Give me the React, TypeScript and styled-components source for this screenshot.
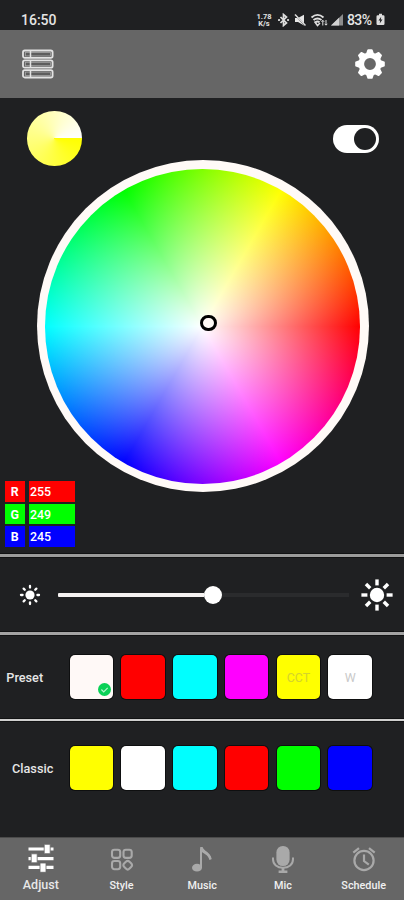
import React from 'react';
import styled, { createGlobalStyle } from 'styled-components';

const GlobalStyle = createGlobalStyle`
  * { box-sizing: border-box; }
  body { margin: 0; background: #1f2022; }
  svg { display: block; flex: none; }
`;

const Screen = styled.main`
  width: 404px;
  height: 900px;
  display: flex;
  flex-direction: column;
  overflow: hidden;
  background: #1f2022;
  color: #fff;
  font-family: Roboto, 'Liberation Sans', sans-serif;
`;

const StatusBar = styled.header`
  height: 30px;
  padding: 9px 19px 0 21px;
  display: flex;
  justify-content: space-between;
  align-items: center;
  color: #e4e4e4;
`;

const Clock = styled.time`
  font-size: 14px;
  line-height: 20px;
  font-weight: 500;
`;

const StatusIcons = styled.div`
  display: flex;
  align-items: center;
  height: 20px;
`;

const NetSpeed = styled.div`
  width: 16px;
  margin-right: 6px;
  font-size: 7.5px;
  line-height: 7px;
  font-weight: 700;
  text-align: center;
`;

const Battery = styled.span`
  width: 27px;
  margin: 0 2px 0 3px;
  font-size: 14px;
  line-height: 20px;
  font-weight: 500;
  letter-spacing: -0.6px;
  white-space: nowrap;
`;

const Toolbar = styled.nav`
  height: 68px;
  padding: 0 19px 0 22px;
  display: flex;
  justify-content: space-between;
  align-items: center;
  background: #666;
`;

const Picker = styled.section`
  height: 456px;
  display: flex;
  flex-direction: column;
`;

const PickerTop = styled.div`
  height: 62.3px;
  padding: 13px 25px 0 27px;
  display: flex;
  justify-content: space-between;
  align-items: flex-start;
`;

const Preview = styled.div`
  width: 54.5px;
  height: 54.5px;
  border-radius: 50%;
  background: conic-gradient(from 90deg, #ff0, #fff);
`;

const Toggle = styled.div`
  width: 46px;
  height: 28px;
  margin-top: 13.5px;
  padding: 3px;
  display: flex;
  justify-content: flex-end;
  border-radius: 14px;
  background: #fff;
`;

const ToggleKnob = styled.span`
  width: 22px;
  height: 22px;
  border-radius: 50%;
  background: #1f2022;
`;

const Wheel = styled.div`
  position: relative;
  flex: none;
  width: 332px;
  height: 332px;
  margin: 0 0 0 36.8px;
  padding: 8.5px;
  border-radius: 50%;
  background: #fffaf7;
`;

const WheelColors = styled.div`
  width: 100%;
  height: 100%;
  border-radius: 50%;
  background:
    radial-gradient(closest-side, #fff, rgba(255, 255, 255, 0)),
    conic-gradient(from 90deg, #f00, #f0f, #00f, #0ff, #0f0, #ff0, #f00);
`;

const WheelCursor = styled.span`
  position: absolute;
  left: 163.2px;
  top: 154.6px;
  width: 16.6px;
  height: 16.6px;
  border: 3.2px solid #000;
  border-radius: 50%;
  background: #fff9f5;
`;

const Channels = styled.div`
  display: flex;
  flex-direction: column;
  gap: 2px;
  margin: -11.3px 0 0 4.6px;
`;

const Channel = styled.div`
  display: flex;
  gap: 4.4px;
  height: 20.6px;
  font-size: 12.4px;
  line-height: 22px;
  font-weight: 500;
`;

const ChannelName = styled.span<{ $color: string }>`
  width: 20.4px;
  text-align: center;
  font-weight: 700;
  background: ${(p) => p.$color};
`;

const ChannelValue = styled.span<{ $color: string }>`
  width: 45.6px;
  padding-left: 0.5px;
  background: ${(p) => p.$color};
`;

const Divider = styled.div<{ $h: number; $color: string }>`
  flex: none;
  height: ${(p) => p.$h}px;
  background: ${(p) => p.$color};
  box-shadow: 0 0 0 1px #111213;
`;

const Brightness = styled.section`
  height: 75px;
  padding: 0 10px 0 19px;
  display: flex;
  align-items: center;
`;

const Track = styled.div`
  display: flex;
  align-items: center;
  width: 291px;
  margin: 0 11px 0 17px;
`;

const TrackFilled = styled.span`
  width: 146px;
  height: 4px;
  border-radius: 1px 0 0 1px;
  background: #f5f2f1;
`;

const Thumb = styled.span`
  width: 18px;
  height: 18px;
  border-radius: 50%;
  background: #fff;
`;

const TrackRest = styled.span`
  flex: 1;
  height: 4px;
  background: #2a2b2d;
`;

const Palette = styled.section<{ $h: number; $pad: number }>`
  height: ${(p) => p.$h}px;
  padding-top: ${(p) => p.$pad}px;
  display: flex;
  align-items: flex-start;
`;

const PaletteLabel = styled.h2<{ $indent: number }>`
  width: 69.5px;
  margin: 0;
  padding-left: ${(p) => p.$indent}px;
  font-size: 12.7px;
  line-height: 46px;
  font-weight: 500;
  color: #e6e6e6;
`;

const Swatches = styled.div`
  display: flex;
  gap: 8.2px;
`;

const Swatch = styled.button<{ $color: string; $text?: string }>`
  position: relative;
  width: 43.6px;
  height: 44px;
  padding: 1px 0 0;
  border: 0;
  border-radius: 5px;
  background: ${(p) => p.$color};
  color: ${(p) => p.$text || '#fff'};
  font: 400 12.4px Roboto, sans-serif;
  box-shadow: 0 0 0 1px #0e0f10;
`;

const Check = styled.svg`
  position: absolute;
  right: 2.6px;
  bottom: 3px;
`;

const TabBar = styled.nav`
  flex: 1;
  display: grid;
  grid-template-columns: repeat(5, 1fr);
  padding-left: 0.5px;
  border-top: 1px solid #4b4b4b;
  background: #666;
`;

const Tab = styled.a<{ $active?: boolean }>`
  display: flex;
  flex-direction: column;
  align-items: center;
  padding-top: 6px;
  color: ${(p) => (p.$active ? '#fff' : '#a9a9a9')};
`;

const TabLabel = styled.span<{ $active?: boolean }>`
  margin-top: ${(p) => (p.$active ? 5 : 6)}px;
  font-size: ${(p) => (p.$active ? 12.5 : 10.8)}px;
  line-height: 14px;
  font-weight: 500;
  color: ${(p) => (p.$active ? '#e8e8e8' : '#f0f0f0')};
`;

function StatusGlyphs() {
  return (
    <svg width="52" height="14" viewBox="0 0 52 14" fill="none" stroke="#dedede">
      <path d="M2.500 4l6 6-3 2.500v-11l3 2.500-6 6" strokeWidth="1.700" />
      <path d="M1 7h.1M10 7h.1" strokeWidth="2.200" strokeLinecap="round" />
      <path d="M17 5h3L26 1.800v10.800l-6-3.600h-3z" fill="#e6e6e6" stroke="none" />
      <path d="M17.500 2l9.500 10.500" stroke="#1f2022" strokeWidth="1.200" />
      <path d="M17 1.500l10.500 11" strokeWidth="1.500" />
      <path d="M33.500 4.400c3.700-3.100 8.300-3.100 12 0M35.500 7c2.500-2 5.500-2 8 0M37.500 9.300c1.200-.9 2.800-.9 4 0" strokeWidth="1.900" />
      <path d="M36.500 8.500l3 4 2.500-2.500" strokeWidth="1.500" />
      <path d="M44.800 7.500v5M43.500 8.800l1.300-1.500 1.300 1.500M48 7v5M46.700 10.800l1.300 1.400 1.300-1.400" strokeWidth="1" />
    </svg>
  );
}

function SignalGlyph() {
  return (
    <svg width="14" height="13" viewBox="0 0 14 13">
      <path d="M1 12.400L13 1v11.400z" fill="#8d8d8d" />
      <path d="M1 12.400L9 4.800v7.600z" fill="#d2d2d2" />
    </svg>
  );
}

function BatteryGlyph() {
  return (
    <svg width="9" height="13" viewBox="0 0 9 13">
      <path d="M3 .8h3v1.400h1.300q1.200 0 1.200 1.200v7.400q0 1.200-1.200 1.200H1.700Q.5 12 .5 10.800V3.400q0-1.200 1.200-1.200H3z" fill="#dedede" />
      <path d="M5.200 3.800L2.500 7.500h1.700l-.5 3 2.800-3.900H4.800z" fill="#1f2022" />
    </svg>
  );
}

function DeviceListIcon() {
  return (
    <svg width="32" height="30" viewBox="0 0 32 30" fill="none" stroke="#e2e2e2" strokeWidth="1.800">
      {[1.500, 11.300, 21.100].map((y) => (
        <g key={y}>
          <rect x="1" y={y} width="29.600" height="7.400" rx="1.800" />
          <rect x="3.500" y={y + 2} width="25" height="3.400" fill="#5d5d5d" stroke="#a5a5a5" strokeWidth=".8" />
          <path d={`M8.500 ${y}v7.400`} strokeWidth="1.500" />
        </g>
      ))}
    </svg>
  );
}

function GearIcon() {
  return (
    <svg width="30" height="30" viewBox="-15 -15 30 30">
      <circle r="8.700" fill="none" stroke="#fff" strokeWidth="5.600" />
      {[0, 45, 90, 135, 180, 225, 270, 315].map((a) => (
        <path key={a} d="M-4-10.200L-2.600-14.200Q-2.400-14.800-1.700-14.800H1.700Q2.400-14.800 2.600-14.200L4-10.200z" fill="#fff" transform={`rotate(${a})`} />
      ))}
    </svg>
  );
}

function SunIcon({ size, core, start, end, stroke, cap }: { size: number; core: number; start: number; end: number; stroke: number; cap: 'butt' | 'round' }) {
  return (
    <svg width={size} height={size} viewBox={`${-size / 2} ${-size / 2} ${size} ${size}`}>
      <circle r={core} fill="#fff" />
      {[0, 45, 90, 135, 180, 225, 270, 315].map((a) => (
        <path key={a} d={`M0-${start}V-${end}`} stroke="#fff" strokeWidth={stroke} strokeLinecap={cap} transform={`rotate(${a})`} />
      ))}
    </svg>
  );
}

function AdjustIcon() {
  return (
    <svg width="26" height="29" viewBox="0 0 26 29" fill="#fff">
      <path d="M.5 3.400h25v3.200H.5zM.5 13h25v3.200H.5zM.5 21.800h25V25H.5z" />
      <path d="M16.200.3h6v9.400h-6zM3.200 9.800h6v9h-6zM12 19h6v9.300h-6z" stroke="#666" strokeWidth=".8" />
    </svg>
  );
}

function StyleIcon() {
  return (
    <svg width="24" height="29" viewBox="0 0 24 29" fill="none" stroke="currentColor" strokeWidth="2.100">
      <rect x="2" y="5.700" width="8.200" height="8.200" rx="2.400" />
      <rect x="13.500" y="5.700" width="8.200" height="8.200" rx="2.400" />
      <rect x="2" y="17" width="8.200" height="8.200" rx="2.400" />
      <rect x="14" y="17.500" width="7.400" height="7.400" rx="2.600" transform="rotate(45 17.700 21.200)" />
    </svg>
  );
}

function MusicIcon() {
  return (
    <svg width="24" height="29" viewBox="0 0 24 29">
      <ellipse cx="7" cy="23.700" rx="5" ry="3.900" fill="currentColor" />
      <path d="M11 24V4.200c1.800 4.300 8.500 4.100 9.600 10.800" fill="none" stroke="currentColor" strokeWidth="2" />
      <path d="M10 3h2.600c1.300 4.500 8 5 8.900 12.300L19.500 16C18 10.500 14 10 12 8z" fill="currentColor" />
    </svg>
  );
}

function MicIcon() {
  return (
    <svg width="24" height="29" viewBox="0 0 24 29">
      <rect x="5.400" y="2" width="13.200" height="20" rx="6.400" fill="currentColor" />
      <path d="M2 13.500v1.800c0 5.200 4.200 8.500 10 8.500s10-3.300 10-8.500v-1.800" fill="none" stroke="currentColor" strokeWidth="2" />
      <path d="M10.600 23h2.800v3.500h3V29H7.600v-2.500h3z" fill="currentColor" />
    </svg>
  );
}

function ScheduleIcon() {
  return (
    <svg width="26" height="29" viewBox="0 0 26 29" fill="none" stroke="currentColor" strokeWidth="2.200">
      <circle cx="13" cy="16.500" r="9.600" />
      <path d="M13 10.500v6.500l4.800 3.700M2.300 8.700l5.700-4.500M23.700 8.700L18 4.200" />
    </svg>
  );
}

const channels = [
  { name: 'R', value: 255, color: '#f00' },
  { name: 'G', value: 249, color: '#0f0' },
  { name: 'B', value: 245, color: '#00f' },
];

const presets = [
  { color: '#fff9f7', selected: true },
  { color: '#f00' },
  { color: '#0ff' },
  { color: '#f0f' },
  { color: '#ff0', label: 'CCT', text: '#d4d42c' },
  { color: '#fff', label: 'W', text: '#c9c9c9' },
];

const classics = ['#ff0', '#fff', '#0ff', '#f00', '#0f0', '#00f'];

const tabs = [
  { label: 'Adjust', Icon: AdjustIcon, active: true },
  { label: 'Style', Icon: StyleIcon },
  { label: 'Music', Icon: MusicIcon },
  { label: 'Mic', Icon: MicIcon },
  { label: 'Schedule', Icon: ScheduleIcon },
];

export default function App() {
  return (
    <Screen>
      <GlobalStyle />
      <StatusBar>
        <Clock>16:50</Clock>
        <StatusIcons>
          <NetSpeed>1.78 K/s</NetSpeed>
          <StatusGlyphs />
          <SignalGlyph />
          <Battery>83%</Battery>
          <BatteryGlyph />
        </StatusIcons>
      </StatusBar>
      <Toolbar>
        <DeviceListIcon />
        <GearIcon />
      </Toolbar>
      <Picker>
        <PickerTop>
          <Preview />
          <Toggle>
            <ToggleKnob />
          </Toggle>
        </PickerTop>
        <Wheel>
          <WheelColors />
          <WheelCursor />
        </Wheel>
        <Channels>
          {channels.map((c) => (
            <Channel key={c.name}>
              <ChannelName $color={c.color}>{c.name}</ChannelName>
              <ChannelValue $color={c.color}>{c.value}</ChannelValue>
            </Channel>
          ))}
        </Channels>
      </Picker>
      <Divider $h={3} $color="#9b9b9b" />
      <Brightness>
        <SunIcon size={22} core={4.6} start={7.4} end={9} stroke={2.3} cap="round" />
        <Track>
          <TrackFilled />
          <Thumb />
          <TrackRest />
        </Track>
        <SunIcon size={34} core={7.2} start={9.6} end={15.6} stroke={3.4} cap="butt" />
      </Brightness>
      <Divider $h={3} $color="#a3a3a3" />
      <Palette $h={84} $pad={19.5}>
        <PaletteLabel $indent={6.3}>Preset</PaletteLabel>
        <Swatches>
          {presets.map((p) => (
            <Swatch key={p.color} $color={p.color} $text={p.text}>
              {p.label}
              {p.selected && (
                <Check width="13" height="13" viewBox="0 0 13 13">
                  <circle cx="6.500" cy="6.500" r="6.500" fill="#0ad157" />
                  <path d="M3.400 6.500l2.300 2.300 4-4" fill="none" stroke="#b5f5cc" strokeWidth="1.200" />
                </Check>
              )}
            </Swatch>
          ))}
        </Swatches>
      </Palette>
      <Divider $h={2} $color="#cfcfcf" />
      <Palette $h={116} $pad={24.5}>
        <PaletteLabel $indent={12}>Classic</PaletteLabel>
        <Swatches>
          {classics.map((c) => (
            <Swatch key={c} $color={c} />
          ))}
        </Swatches>
      </Palette>
      <TabBar>
        {tabs.map(({ label, Icon, active }) => (
          <Tab key={label} $active={active}>
            <Icon />
            <TabLabel $active={active}>{label}</TabLabel>
          </Tab>
        ))}
      </TabBar>
    </Screen>
  );
}
